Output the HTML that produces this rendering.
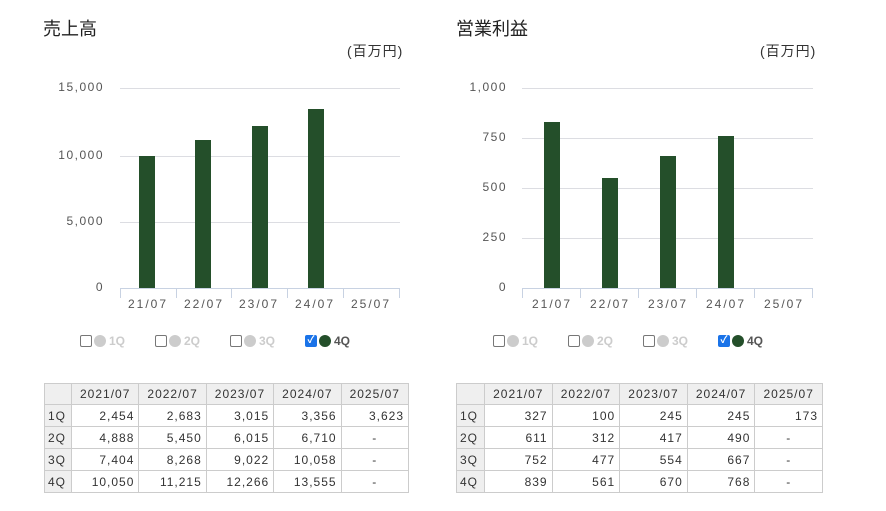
<!DOCTYPE html>
<html><head><meta charset="utf-8"><style>
*{margin:0;padding:0;box-sizing:border-box}
body{width:886px;height:511px;background:#fff;position:relative;overflow:hidden;font-family:"Liberation Sans","Noto Sans CJK JP",sans-serif;color:#333}
.a{position:absolute}
.t{font-size:18px;color:#222;top:15px}
.u{font-size:14px;color:#333;top:41px;letter-spacing:1px}
.g{position:absolute;height:1px;background:#dcdde2}
.yl{position:absolute;font-size:12px;color:#555;letter-spacing:1.5px;text-align:right;width:60px}
.bar{position:absolute;background:#244f2a;width:16px}
.tk{position:absolute;width:1px;height:9px;background:#c8d2e2;top:289px}
.xl{position:absolute;top:297px;font-size:12px;color:#555;letter-spacing:2px;width:56px;text-align:center}
.lg{position:absolute;top:334px;height:14px;font-size:12px;font-weight:bold;color:#ccc;display:flex;align-items:center}
.cb{width:12px;height:12px;border:1px solid #777;border-radius:2px;background:#fff;margin-right:2px}
.cbk{width:12px;height:12px;border-radius:2px;background:#1a73e8;margin-right:2px;color:#fff;font-size:10px;line-height:12px;text-align:center}
.dot{width:12px;height:12px;border-radius:50%;background:#ccc;margin-right:3px}
table{position:absolute;border-collapse:collapse;font-size:12px;letter-spacing:1px;color:#333;top:383px}
td{border:1px solid #ccc;height:22px;text-align:right;padding:0 4px}
tr:first-child td{background:#efefef;text-align:center;height:21px}
td:first-child{background:#efefef;text-align:left;padding-left:3px}
</style></head><body>
<!-- LEFT -->
<div class="a t" style="left:43px">売上高</div>
<div class="a u" style="left:347px">(百万円)</div>
<div class="g" style="left:120px;width:280px;top:88px"></div>
<div class="g" style="left:120px;width:280px;top:156px"></div>
<div class="g" style="left:120px;width:280px;top:222px"></div>
<div class="g" style="left:120px;width:280px;top:288px;background:#c8d2e2"></div>
<div class="yl" style="left:44px;top:80px">15,000</div>
<div class="yl" style="left:44px;top:148px">10,000</div>
<div class="yl" style="left:44px;top:214px">5,000</div>
<div class="yl" style="left:44px;top:280px">0</div>
<div class="bar" style="left:139px;top:156px;height:132px"></div>
<div class="bar" style="left:195px;top:140px;height:148px"></div>
<div class="bar" style="left:252px;top:126px;height:162px"></div>
<div class="bar" style="left:308px;top:109px;height:179px"></div>
<div class="tk" style="left:120px"></div><div class="tk" style="left:176px"></div><div class="tk" style="left:231px"></div><div class="tk" style="left:287px"></div><div class="tk" style="left:343px"></div><div class="tk" style="left:399px"></div>
<div class="xl" style="left:120px">21/07</div><div class="xl" style="left:176px">22/07</div><div class="xl" style="left:231px">23/07</div><div class="xl" style="left:287px">24/07</div><div class="xl" style="left:343px">25/07</div>
<div class="lg" style="left:80px"><div class="cb"></div><div class="dot"></div>1Q</div>
<div class="lg" style="left:155px"><div class="cb"></div><div class="dot"></div>2Q</div>
<div class="lg" style="left:230px"><div class="cb"></div><div class="dot"></div>3Q</div>
<div class="lg" style="left:305px;color:#555"><div class="cbk">✓</div><div class="dot" style="background:#244f2a"></div>4Q</div>
<table style="left:44px;width:365px">
<tr><td style="width:27px"></td><td>2021/07</td><td>2022/07</td><td>2023/07</td><td>2024/07</td><td>2025/07</td></tr>
<tr><td>1Q</td><td>2,454</td><td>2,683</td><td>3,015</td><td>3,356</td><td>3,623</td></tr>
<tr><td>2Q</td><td>4,888</td><td>5,450</td><td>6,015</td><td>6,710</td><td style="text-align:center">-</td></tr>
<tr><td>3Q</td><td>7,404</td><td>8,268</td><td>9,022</td><td>10,058</td><td style="text-align:center">-</td></tr>
<tr><td>4Q</td><td>10,050</td><td>11,215</td><td>12,266</td><td>13,555</td><td style="text-align:center">-</td></tr>
</table>
<!-- RIGHT -->
<div class="a t" style="left:456px">営業利益</div>
<div class="a u" style="left:760px">(百万円)</div>
<div class="g" style="left:522px;width:291px;top:88px"></div>
<div class="g" style="left:522px;width:291px;top:138px"></div>
<div class="g" style="left:522px;width:291px;top:188px"></div>
<div class="g" style="left:522px;width:291px;top:238px"></div>
<div class="g" style="left:522px;width:291px;top:288px;background:#c8d2e2"></div>
<div class="yl" style="left:447px;top:80px">1,000</div>
<div class="yl" style="left:447px;top:130px">750</div>
<div class="yl" style="left:447px;top:180px">500</div>
<div class="yl" style="left:447px;top:230px">250</div>
<div class="yl" style="left:447px;top:280px">0</div>
<div class="bar" style="left:544px;top:122px;height:166px"></div>
<div class="bar" style="left:602px;top:178px;height:110px"></div>
<div class="bar" style="left:660px;top:156px;height:132px"></div>
<div class="bar" style="left:718px;top:136px;height:152px"></div>
<div class="tk" style="left:522px"></div><div class="tk" style="left:580px"></div><div class="tk" style="left:638px"></div><div class="tk" style="left:696px"></div><div class="tk" style="left:754px"></div><div class="tk" style="left:812px"></div>
<div class="xl" style="left:524px">21/07</div><div class="xl" style="left:582px">22/07</div><div class="xl" style="left:640px">23/07</div><div class="xl" style="left:698px">24/07</div><div class="xl" style="left:756px">25/07</div>
<div class="lg" style="left:493px"><div class="cb"></div><div class="dot"></div>1Q</div>
<div class="lg" style="left:568px"><div class="cb"></div><div class="dot"></div>2Q</div>
<div class="lg" style="left:643px"><div class="cb"></div><div class="dot"></div>3Q</div>
<div class="lg" style="left:718px;color:#555"><div class="cbk">✓</div><div class="dot" style="background:#244f2a"></div>4Q</div>
<table style="left:456px;width:367px">
<tr><td style="width:28px"></td><td>2021/07</td><td>2022/07</td><td>2023/07</td><td>2024/07</td><td>2025/07</td></tr>
<tr><td>1Q</td><td>327</td><td>100</td><td>245</td><td>245</td><td>173</td></tr>
<tr><td>2Q</td><td>611</td><td>312</td><td>417</td><td>490</td><td style="text-align:center">-</td></tr>
<tr><td>3Q</td><td>752</td><td>477</td><td>554</td><td>667</td><td style="text-align:center">-</td></tr>
<tr><td>4Q</td><td>839</td><td>561</td><td>670</td><td>768</td><td style="text-align:center">-</td></tr>
</table>
</body></html>
